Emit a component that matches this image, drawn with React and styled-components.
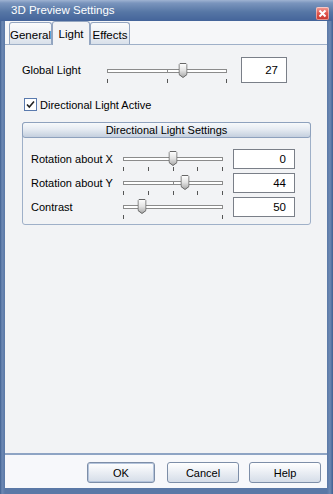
import React from 'react'
import styled, { createGlobalStyle } from 'styled-components'

const GlobalStyle = createGlobalStyle`
  html, body { margin: 0; padding: 0; background: #ffffff; }
  body { font-family: "Liberation Sans", Arial, sans-serif; font-size: 11px; color: #000; }
`

const Window = styled.div`
  width: 333px;
  height: 494px;
  display: flex;
  flex-direction: column;
  background: linear-gradient(90deg, #3f5f90 0, #6d89b4 2px, #5a78a6 5px, #5a78a6 calc(100% - 6px), #6d89b4 calc(100% - 3px), #3f5f90 100%);
  box-sizing: border-box;
`

const TitleBar = styled.div`
  height: 21px;
  flex: none;
  display: flex;
  align-items: flex-start;
  justify-content: space-between;
  padding: 0 4px 0 11px;
  background: linear-gradient(180deg, #9fb3d2 0, #7a95bd 3px, #5676a5 12px, #44649a 21px);
  color: #ffffff;
  font-size: 11.5px;
  line-height: 21px;
`

const CloseBtn = styled.div`
  width: 13px;
  height: 13px;
  margin-top: 7px;
  border-radius: 2px;
  background: linear-gradient(180deg, #f3a29b 0, #e0554c 50%, #c8342c 100%);
  box-shadow: inset 0 0 0 1px rgba(255, 255, 255, 0.45);
  display: flex;
  align-items: center;
  justify-content: center;
`

const Client = styled.div`
  flex: 1;
  margin: 0 6px 6px 5px;
  display: flex;
  flex-direction: column;
  min-height: 0;
`

const TabStrip = styled.div`
  height: 24px;
  flex: none;
  display: flex;
  align-items: flex-end;
  padding-left: 4px;
  background: #f6f7f9;
  border-bottom: 1px solid #9fb0c8;
  box-sizing: border-box;
`

const Tab = styled.div`
  width: ${p => p.$w}px;
  height: ${p => (p.$active ? 24 : 22)}px;
  box-sizing: border-box;
  border: 1px solid #93a5c0;
  border-bottom: none;
  border-radius: 3px 3px 0 0;
  background: ${p => (p.$active ? '#f2f3f5' : 'linear-gradient(180deg, #fafbfc 0, #eef1f5 50%, #d9e0ea 100%)')};
  margin-bottom: ${p => (p.$active ? -1 : 0)}px;
  position: relative;
  z-index: ${p => (p.$active ? 1 : 0)};
  display: flex;
  align-items: center;
  justify-content: center;
  font-size: 11.5px;
  padding-top: ${p => (p.$active ? 0 : 2)}px;
`

const Panel = styled.div`
  flex: 1;
  background: #f2f3f5;
  border-bottom: 2px solid #8ea4c4;
  padding: 12px 0 0 17px;
  display: flex;
  flex-direction: column;
  min-height: 0;
`

const Row = styled.div`
  display: flex;
  align-items: center;
  height: ${p => p.$h}px;
`

const Label = styled.div`
  width: ${p => p.$w}px;
  flex: none;
  font-size: 11px;
  white-space: nowrap;
`

const SliderWrap = styled.div`
  width: ${p => p.$w}px;
  flex: none;
  align-self: flex-start;
  margin-top: ${p => p.$mt}px;
  display: flex;
  flex-direction: column;
`

const ThumbArea = styled.div`
  position: relative;
  height: 15px;
`

const Track = styled.div`
  position: absolute;
  left: 0;
  right: 0;
  top: 6px;
  height: 4px;
  box-sizing: border-box;
  border: 1px solid #8b8b8b;
  background: #ffffff;
`

const Mark = styled.div`
  position: absolute;
  left: 50%;
  top: -1px;
  bottom: -1px;
  width: 1px;
  background: #8b8b8b;
`

const ThumbBox = styled.div`
  position: absolute;
  top: 0;
  width: 9px;
  height: 15px;
  transform: translateX(-50%);
`

const Ticks = styled.div`
  display: flex;
  justify-content: space-between;
  margin-top: 1px;
  height: 4px;
`

const Tick = styled.div`
  width: 1px;
  height: 4px;
  background: #555555;
`

const ValueBox = styled.div`
  width: ${p => p.$w}px;
  height: ${p => p.$h}px;
  flex: none;
  margin-left: ${p => p.$ml}px;
  box-sizing: border-box;
  border: 1px solid #7a7f88;
  background: #ffffff;
  display: flex;
  align-items: center;
  justify-content: flex-end;
  padding-right: 8px;
  font-size: 11.5px;
`

const CheckRow = styled.div`
  display: flex;
  align-items: center;
  margin: 15px 0 0 2px;
  height: 13px;
  gap: 3px;
  font-size: 11px;
`

const CheckBox = styled.div`
  width: 13px;
  height: 13px;
  box-sizing: border-box;
  border: 1px solid #5a7aae;
  background: #ffffff;
  display: flex;
  align-items: center;
  justify-content: center;
`

const Group = styled.div`
  width: 289px;
  margin: 11px 0 0 0;
  box-sizing: border-box;
  border: 1px solid #9fb0c8;
  border-radius: 3px;
  padding: 0 0 7px 0;
`

const GroupHeader = styled.div`
  height: 16px;
  margin: -1px -1px 0 -1px;
  border: 1px solid #8ea1bd;
  border-radius: 3px;
  box-sizing: border-box;
  background: linear-gradient(180deg, #f7f9fb 0, #e6ebf2 45%, #c4cfde 100%);
  text-align: center;
  font-size: 11px;
  line-height: 14px;
`

const GroupBody = styled.div`
  display: flex;
  flex-direction: column;
  gap: 4px;
  padding: 11px 0 0 8px;
`

const Footer = styled.div`
  height: 33px;
  flex: none;
  background: #f7f8fb;
  display: flex;
  justify-content: flex-end;
  align-items: flex-start;
  padding: 7px 6px 0 0;
  box-sizing: border-box;
`

const Button = styled.div`
  width: ${p => p.$w}px;
  height: 21px;
  margin-left: ${p => p.$ml}px;
  box-sizing: border-box;
  border: 1px solid #7d8ea8;
  border-radius: 3px;
  background: linear-gradient(180deg, #ffffff 0, #eef1f6 40%, #d5dde8 100%);
  box-shadow: ${p => (p.$default ? 'inset 0 0 0 1px #b4c4dc' : 'none')};
  display: flex;
  align-items: center;
  justify-content: center;
  font-size: 11px;
`

const Thumb = () => (
  <svg width="9" height="15" viewBox="0 0 9 15">
    <defs>
      <linearGradient id="tg" x1="0" y1="0" x2="0" y2="1">
        <stop offset="0" stopColor="#ffffff" />
        <stop offset="0.5" stopColor="#e2e2e2" />
        <stop offset="1" stopColor="#a5a5a5" />
      </linearGradient>
    </defs>
    <path d="M1.5 0.5 H7.5 L8.5 1.5 V11.5 L4.5 14.5 L0.5 11.5 V1.5 Z" fill="url(#tg)" stroke="#666" />
  </svg>
)

const Slider = ({ w, mt, pos, ticks, mark }) => (
  <SliderWrap $w={w} $mt={mt}>
    <ThumbArea>
      <Track>{mark && <Mark />}</Track>
      <ThumbBox style={{ left: `${pos * 100}%` }}>
        <Thumb />
      </ThumbBox>
    </ThumbArea>
    <Ticks>
      {Array.from({ length: ticks }).map((_, i) => <Tick key={i} />)}
    </Ticks>
  </SliderWrap>
)

const groupRows = [
  { label: 'Rotation about X', pos: 0.5, ticks: 5, mark: true, value: '0' },
  { label: 'Rotation about Y', pos: 0.62, ticks: 5, mark: true, value: '44' },
  { label: 'Contrast', pos: 0.19, ticks: 2, mark: false, value: '50' },
]

export default function App() {
  return (
    <>
      <GlobalStyle />
      <Window>
        <TitleBar>
          <span>3D Preview Settings</span>
          <CloseBtn>
            <svg width="9" height="9" viewBox="0 0 9 9">
              <path d="M1.5 1.5 L7.5 7.5 M7.5 1.5 L1.5 7.5" stroke="#fff" strokeWidth="2" />
            </svg>
          </CloseBtn>
        </TitleBar>
        <Client>
          <TabStrip>
            <Tab $w={43}>General</Tab>
            <Tab $w={38} $active>Light</Tab>
            <Tab $w={40}>Effects</Tab>
          </TabStrip>
          <Panel>
            <Row $h={26}>
              <Label $w={85}>Global Light</Label>
              <Slider w={120} mt={6} pos={0.63} ticks={3} mark />
              <ValueBox $w={46} $h={26} $ml={14}>27</ValueBox>
            </Row>
            <CheckRow>
              <CheckBox>
                <svg width="9" height="9" viewBox="0 0 9 9">
                  <path d="M1 4.5 L3.3 7 L8 1.5" fill="none" stroke="#222" strokeWidth="1.6" />
                </svg>
              </CheckBox>
              Directional Light Active
            </CheckRow>
            <Group>
              <GroupHeader>Directional Light Settings</GroupHeader>
              <GroupBody>
                {groupRows.map(r => (
                  <Row $h={20} key={r.label}>
                    <Label $w={92}>{r.label}</Label>
                    <Slider w={100} mt={2} pos={r.pos} ticks={r.ticks} mark={r.mark} />
                    <ValueBox $w={62} $h={20} $ml={10}>{r.value}</ValueBox>
                  </Row>
                ))}
              </GroupBody>
            </Group>
          </Panel>
          <Footer>
            <Button $w={68} $ml={0} $default>OK</Button>
            <Button $w={72} $ml={12}>Cancel</Button>
            <Button $w={72} $ml={10}>Help</Button>
          </Footer>
        </Client>
      </Window>
    </>
  )
}
